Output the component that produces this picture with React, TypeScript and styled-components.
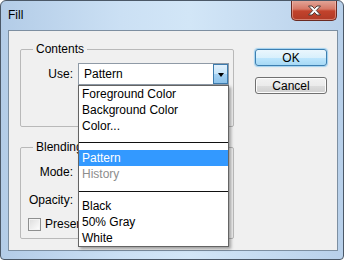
import styled, { createGlobalStyle } from "styled-components";

const GlobalStyle = createGlobalStyle`
  html, body {
    margin: 0;
    padding: 0;
    background: #ffffff;
  }
  body {
    font-family: "Liberation Sans", Arial, sans-serif;
    font-size: 12px;
    color: #000;
  }
`;

const Window = styled.div`
  width: 344px;
  height: 260px;
  box-sizing: border-box;
  border: 1px solid #4b5867;
  border-radius: 6px 6px 4px 4px;
  background: linear-gradient(
    to right,
    #b3cce7 0%,
    #cbe0f4 35%,
    #d2e6f7 55%,
    #c4daf0 80%,
    #b8d0ea 100%
  );
  display: flex;
  flex-direction: column;
  overflow: hidden;
`;

const TitleBar = styled.div`
  height: 29px;
  display: flex;
  justify-content: space-between;
  align-items: flex-start;
  flex-shrink: 0;
`;

const Title = styled.div`
  padding: 7px 0 0 7px;
  line-height: 14px;
  font-size: 12px;
  color: #000;
`;

const CloseButton = styled.div`
  width: 46px;
  height: 21px;
  margin: -1px 6px 0 0;
  box-sizing: border-box;
  border: 1px solid #6a2a22;
  border-top: none;
  border-radius: 0 0 5px 5px;
  background: linear-gradient(
    to bottom,
    #e3a99c 0%,
    #d67866 45%,
    #c2432c 55%,
    #b03a26 100%
  );
  box-shadow: inset 0 0 0 1px rgba(255, 210, 200, 0.45);
  display: flex;
  align-items: center;
  justify-content: center;
`;

const Client = styled.div`
  width: 330px;
  height: 221px;
  margin-left: 7px;
  box-sizing: border-box;
  border: 1px solid #7d8fa1;
  background: #f0f0f0;
  display: flex;
  align-items: flex-start;
  padding: 11px 0 0 11px;
`;

const LeftColumn = styled.div`
  width: 214px;
  display: flex;
  flex-direction: column;
`;

const Group = styled.fieldset<{ $top?: number }>`
  margin: ${(p) => p.$top ?? 0}px 0 0 0;
  padding: 0;
  width: 214px;
  box-sizing: border-box;
  border: 1px solid #b9b9b9;
  border-radius: 2px;
  min-width: 0;
`;

const Legend = styled.legend`
  margin-left: 12px;
  padding: 0 3px;
  line-height: 14px;
  font-size: 12px;
  white-space: nowrap;
`;

const GroupBody = styled.div<{ $h: number }>`
  height: ${(p) => p.$h}px;
  display: flex;
  flex-direction: column;
`;

const FieldRow = styled.div<{ $top: number }>`
  margin-top: ${(p) => p.$top}px;
  display: grid;
  grid-template-columns: 52px 151px;
  column-gap: 5px;
  align-items: center;
  height: 22px;
`;

const FieldLabel = styled.span`
  text-align: right;
  line-height: 14px;
  white-space: nowrap;
`;

const SelectWrap = styled.div`
  position: relative;
  width: 151px;
  height: 22px;
`;

const SelectBox = styled.div`
  width: 151px;
  height: 22px;
  box-sizing: border-box;
  border: 1px solid #8f9aa6;
  background: #fff;
  display: flex;
  align-items: stretch;
`;

const SelectValue = styled.span`
  flex: 1;
  padding-left: 5px;
  line-height: 20px;
  white-space: nowrap;
  overflow: hidden;
`;

const ArrowButton = styled.span`
  width: 15px;
  box-sizing: border-box;
  border: 1px solid #3d7bad;
  background: linear-gradient(to bottom, #e3f1fc 0%, #c5e4f9 50%, #a4d1f3 52%, #8cc2ea 100%);
  display: flex;
  align-items: center;
  justify-content: center;
`;

const Arrow = styled.span`
  width: 0;
  height: 0;
  border-left: 3.5px solid transparent;
  border-right: 3.5px solid transparent;
  border-top: 4px solid #000;
  margin-top: 1px;
`;

const DropList = styled.div`
  position: absolute;
  top: 22px;
  left: 0;
  width: 151px;
  height: 162px;
  box-sizing: border-box;
  border: 1px solid #646464;
  background: #fff;
  box-shadow: 2px 2px 3px rgba(0, 0, 0, 0.35);
  z-index: 10;
  display: flex;
  flex-direction: column;
`;

const Item = styled.div<{ $selected?: boolean; $disabled?: boolean }>`
  height: 16px;
  line-height: 16px;
  padding-left: 3px;
  white-space: nowrap;
  background: ${(p) => (p.$selected ? "#3399ff" : "transparent")};
  color: ${(p) => (p.$selected ? "#fff" : p.$disabled ? "#8d8d8d" : "#000")};
`;

const Separator = styled.div<{ $offset: number }>`
  height: 16px;
  box-sizing: border-box;
  padding-top: ${(p) => p.$offset}px;

  &::after {
    content: "";
    display: block;
    height: 1px;
    background: #111;
  }
`;

const SmallInput = styled.div`
  width: 60px;
  height: 20px;
  box-sizing: border-box;
  border: 1px solid #8f9aa6;
  background: #fff;
`;

const CheckRow = styled.label`
  margin: 5px 0 0 7px;
  height: 16px;
  display: flex;
  align-items: center;
  gap: 4px;
  white-space: nowrap;
`;

const CheckBox = styled.span`
  width: 13px;
  height: 13px;
  box-sizing: border-box;
  border: 1px solid #8e8f8f;
  background: linear-gradient(135deg, #dcdcdc 0%, #f4f4f4 70%, #ffffff 100%);
  box-shadow: inset 0 0 0 1px #f4f4f4;
`;

/* the open list hides the rest of this label */
const CheckText = styled.span`
  width: 33px;
  overflow: hidden;
  line-height: 16px;
`;

const RightColumn = styled.div`
  margin: 7px 0 0 21px;
  display: flex;
  flex-direction: column;
  gap: 11px;
`;

const Button = styled.div<{ $default?: boolean }>`
  width: 72px;
  height: 17px;
  box-sizing: border-box;
  border: 1px solid ${(p) => (p.$default ? "#3c7fb1" : "#707070")};
  border-radius: 3px;
  background: ${(p) =>
    p.$default
      ? "linear-gradient(to bottom, #eaf6fd 0%, #d9f0fc 50%, #bee6fd 52%, #a7d9f5 100%)"
      : "linear-gradient(to bottom, #f2f2f2 0%, #ebebeb 50%, #dddddd 52%, #cfcfcf 100%)"};
  box-shadow: ${(p) =>
    p.$default ? "0 0 1px 1px rgba(110, 190, 240, 0.6)" : "inset 0 0 0 1px #fcfcfc"};
  display: flex;
  align-items: center;
  justify-content: center;
  line-height: 14px;
  font-size: 12px;
`;

const CloseGlyph = () => (
  <svg width="15" height="11" viewBox="0 0 15 11">
    <path
      d="M1.5 1 L5 1 L7.5 3.6 L10 1 L13.5 1 L9.3 5.5 L13.5 10 L10 10 L7.5 7.4 L5 10 L1.5 10 L5.7 5.5 Z"
      fill="#ffffff"
      stroke="#4d3a36"
      strokeWidth="1"
      strokeLinejoin="round"
    />
  </svg>
);

const items = [
  { label: "Foreground Color" },
  { label: "Background Color" },
  { label: "Color..." },
  { sep: 8 },
  { label: "Pattern", selected: true },
  { label: "History", disabled: true },
  { sep: 9 },
  { label: "Black" },
  { label: "50% Gray" },
  { label: "White" },
];

const App = () => {
  return (
    <>
      <GlobalStyle />
      <Window>
        <TitleBar>
          <Title>Fill</Title>
          <CloseButton>
            <CloseGlyph />
          </CloseButton>
        </TitleBar>
        <Client>
          <LeftColumn>
            <Group>
              <Legend>Contents</Legend>
              <GroupBody $h={70}>
                <FieldRow $top={7}>
                  <FieldLabel>Use:</FieldLabel>
                  <SelectWrap>
                    <SelectBox>
                      <SelectValue>Pattern</SelectValue>
                      <ArrowButton>
                        <Arrow />
                      </ArrowButton>
                    </SelectBox>
                    <DropList>
                      {items.map((it, i) =>
                        it.sep !== undefined ? (
                          <Separator key={i} $offset={it.sep} />
                        ) : (
                          <Item key={i} $selected={it.selected} $disabled={it.disabled}>
                            {it.label}
                          </Item>
                        )
                      )}
                    </DropList>
                  </SelectWrap>
                </FieldRow>
              </GroupBody>
            </Group>
            <Group $top={13}>
              <Legend>Blending</Legend>
              <GroupBody $h={84}>
                <FieldRow $top={7}>
                  <FieldLabel>Mode:</FieldLabel>
                  <SelectBox>
                    <SelectValue />
                    <ArrowButton>
                      <Arrow />
                    </ArrowButton>
                  </SelectBox>
                </FieldRow>
                <FieldRow $top={6}>
                  <FieldLabel>Opacity:</FieldLabel>
                  <SmallInput />
                </FieldRow>
                <CheckRow>
                  <CheckBox />
                  <CheckText>Preserve Transparency</CheckText>
                </CheckRow>
              </GroupBody>
            </Group>
          </LeftColumn>
          <RightColumn>
            <Button $default>OK</Button>
            <Button>Cancel</Button>
          </RightColumn>
        </Client>
      </Window>
    </>
  );
};

export default App;
